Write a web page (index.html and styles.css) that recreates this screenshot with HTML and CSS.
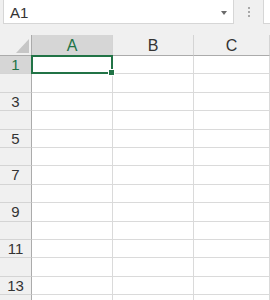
FILE: index.html
```html
<!DOCTYPE html>
<html lang="en">
<head>
    <meta charset="UTF-8">
    <title>Sheet</title>
    <link rel="stylesheet" href="styles.css">
</head>
<body>
    <div class="formula-bar">
        <div class="name-box">
            <span class="name-text">A1</span>
            <span class="caret"></span>
        </div>
        <div class="grip"><i></i><i></i><i></i></div>
        <div class="fx-box"></div>
    </div>

    <div class="sheet">
        <div class="corner"></div>
        <div class="col-head selected">A</div>
        <div class="col-head">B</div>
        <div class="col-head">C</div>

        <div class="row-head selected">1</div>
        <div class="cell active"></div><div class="cell"></div><div class="cell"></div>
        <div class="row-head"></div>
        <div class="cell"></div><div class="cell"></div><div class="cell"></div>
        <div class="row-head">3</div>
        <div class="cell"></div><div class="cell"></div><div class="cell"></div>
        <div class="row-head"></div>
        <div class="cell"></div><div class="cell"></div><div class="cell"></div>
        <div class="row-head">5</div>
        <div class="cell"></div><div class="cell"></div><div class="cell"></div>
        <div class="row-head"></div>
        <div class="cell"></div><div class="cell"></div><div class="cell"></div>
        <div class="row-head">7</div>
        <div class="cell"></div><div class="cell"></div><div class="cell"></div>
        <div class="row-head"></div>
        <div class="cell"></div><div class="cell"></div><div class="cell"></div>
        <div class="row-head">9</div>
        <div class="cell"></div><div class="cell"></div><div class="cell"></div>
        <div class="row-head"></div>
        <div class="cell"></div><div class="cell"></div><div class="cell"></div>
        <div class="row-head">11</div>
        <div class="cell"></div><div class="cell"></div><div class="cell"></div>
        <div class="row-head"></div>
        <div class="cell"></div><div class="cell"></div><div class="cell"></div>
        <div class="row-head">13</div>
        <div class="cell"></div><div class="cell"></div><div class="cell"></div>
        <div class="row-head"></div>
        <div class="cell"></div><div class="cell"></div><div class="cell"></div>
    </div>
</body>
</html>
```

FILE: styles.css
```css
* {
    margin: 0;
    padding: 0;
    box-sizing: border-box;
}

body {
    width: 270px;
    height: 300px;
    overflow: hidden;
    background-color: #f0f0f0;
    font-family: "Liberation Sans", Arial, sans-serif;
    color: #333333;
}

/* Name box row */
.formula-bar {
    display: flex;
    align-items: flex-start;
    height: 35px;
    padding-left: 3px;
}

.name-box {
    width: 231px;
    height: 24px;
    background-color: #ffffff;
    border: 1px solid #d6d6d6;
    border-top: none;
    display: flex;
    align-items: center;
    justify-content: space-between;
    padding: 0 6px 0 6px;
}

.name-text {
    font-size: 15px;
    color: #333333;
    padding-top: 1px;
}

.caret {
    width: 0;
    height: 0;
    border-left: 3.5px solid transparent;
    border-right: 3.5px solid transparent;
    border-top: 4px solid #6a6a6a;
    margin-top: 2px;
}

.grip {
    width: 29px;
    height: 24px;
    display: flex;
    flex-direction: column;
    align-items: center;
    justify-content: center;
    gap: 2px;
}

.grip i {
    width: 2px;
    height: 2px;
    background-color: #a8a8a8;
}

.fx-box {
    flex: 1;
    height: 24px;
    background-color: #ffffff;
    border: 1px solid #d6d6d6;
    border-top: none;
    border-right: none;
}

/* Grid */
.sheet {
    display: grid;
    grid-template-columns: 32px 81px 81px 1fr;
    grid-template-rows: 21px repeat(14, 18.4px);
    background-color: #ffffff;
}

.corner {
    position: relative;
    background-color: #f0f0f0;
    border-right: 1px solid #ababab;
    border-bottom: 1px solid #ababab;
}

.corner::after {
    content: "";
    position: absolute;
    right: 2px;
    bottom: 2px;
    width: 0;
    height: 0;
    border-left: 13px solid transparent;
    border-bottom: 14px solid #c6c6c6;
}

.col-head {
    background-color: #f0f0f0;
    border-right: 1px solid #d4d4d4;
    border-bottom: 1px solid #ababab;
    text-align: center;
    font-size: 16px;
    line-height: 20px;
    padding-top: 1px;
}

.col-head.selected {
    background-color: #d6d6d6;
    color: #217346;
}

.row-head {
    background-color: #f0f0f0;
    border-right: 1px solid #ababab;
    border-bottom: 1px solid #d4d4d4;
    text-align: center;
    font-size: 15px;
    line-height: 18px;
}

.row-head.selected {
    background-color: #d6d6d6;
    color: #217346;
}

.cell {
    border-right: 1px solid #dadada;
    border-bottom: 1px solid #dadada;
}

.cell.active {
    position: relative;
}

.cell.active::before {
    content: "";
    position: absolute;
    left: -1px;
    top: -1px;
    right: -1px;
    bottom: -1px;
    border: 2px solid #217346;
}

.cell.active::after {
    content: "";
    position: absolute;
    right: -3px;
    bottom: -3px;
    width: 5px;
    height: 5px;
    background-color: #217346;
    border: 1px solid #ffffff;
}
```
